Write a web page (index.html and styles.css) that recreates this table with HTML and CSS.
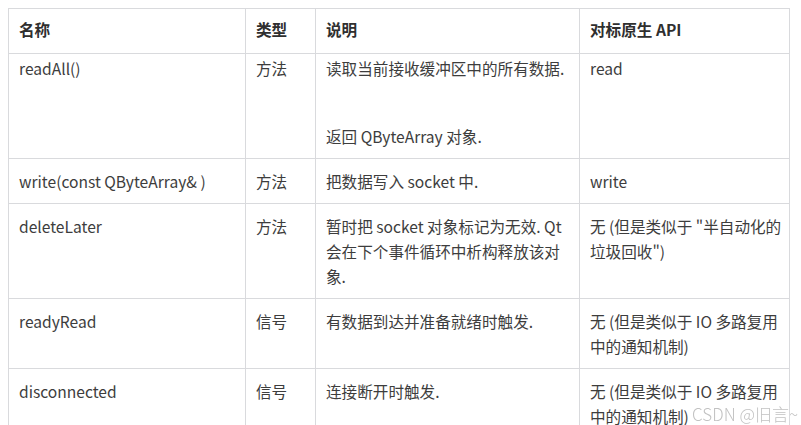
FILE: index.html
```html
<!DOCTYPE html>
<html lang="zh-CN">
<head>
<meta charset="utf-8">
<title>QTcpSocket</title>
<link rel="stylesheet" href="styles.css">
</head>
<body>
<table class="api-table">
  <colgroup>
    <col class="col-name">
    <col class="col-type">
    <col class="col-desc">
    <col class="col-native">
  </colgroup>
  <thead>
    <tr>
      <th>名称</th>
      <th>类型</th>
      <th>说明</th>
      <th>对标原生 API</th>
    </tr>
  </thead>
  <tbody>
    <tr class="row-tight">
      <td>readAll()</td>
      <td>方法</td>
      <td><p class="para para-gap">读取当前接收缓冲区中的所有数据.</p><p class="para">返回 QByteArray 对象.</p></td>
      <td>read</td>
    </tr>
    <tr>
      <td>write(const QByteArray&amp; )</td>
      <td>方法</td>
      <td>把数据写入 socket 中.</td>
      <td>write</td>
    </tr>
    <tr>
      <td>deleteLater</td>
      <td>方法</td>
      <td>暂时把 socket 对象标记为无效. Qt 会在下个事件循环中析构释放该对象.</td>
      <td>无 (但是类似于 "半自动化的垃圾回收")</td>
    </tr>
    <tr>
      <td>readyRead</td>
      <td>信号</td>
      <td>有数据到达并准备就绪时触发.</td>
      <td>无 (但是类似于 IO 多路复用中的通知机制)</td>
    </tr>
    <tr>
      <td>disconnected</td>
      <td>信号</td>
      <td>连接断开时触发.</td>
      <td>无 (但是类似于 IO 多路复用中的通知机制)</td>
    </tr>
  </tbody>
</table>
<div class="watermark">CSDN @旧言~</div>
</body>
</html>
```

FILE: styles.css
```css
html, body {
  background: #ffffff;
}
body {
  margin: 8px;
  font-family: "Noto Sans CJK SC", "Noto Sans", sans-serif;
  font-size: 15.6px;
  line-height: 24.6px;
  color: #3d3d3d;
}
.api-table {
  border-collapse: collapse;
  table-layout: fixed;
  width: 781px;
}
.col-name { width: 237px; }
.col-type { width: 70px; }
.col-desc { width: 264px; }
.col-native { width: 210px; }

.api-table th,
.api-table td {
  border: 1px solid #d9dadd;
  padding: 10px 10px;
  text-align: left;
  vertical-align: top;
  word-break: break-all;
}
.api-table th:last-child,
.api-table td:last-child {
  padding-right: 4px;
}
.api-table th {
  font-weight: 700;
  color: #2f2f2f;
  padding-top: 8px;
  padding-bottom: 11px;
}
.row-tight td {
  padding-top: 2px;
  padding-bottom: 9px;
}
.para {
  margin: 0;
}
.para-gap {
  margin-bottom: 44px;
}
.watermark {
  position: fixed;
  right: 3px;
  bottom: 0;
  font-size: 17px;
  line-height: 22px;
  color: #c2c2c2;
  font-weight: 300;
  text-shadow: 0 0 1px #ffffff;
}
```
